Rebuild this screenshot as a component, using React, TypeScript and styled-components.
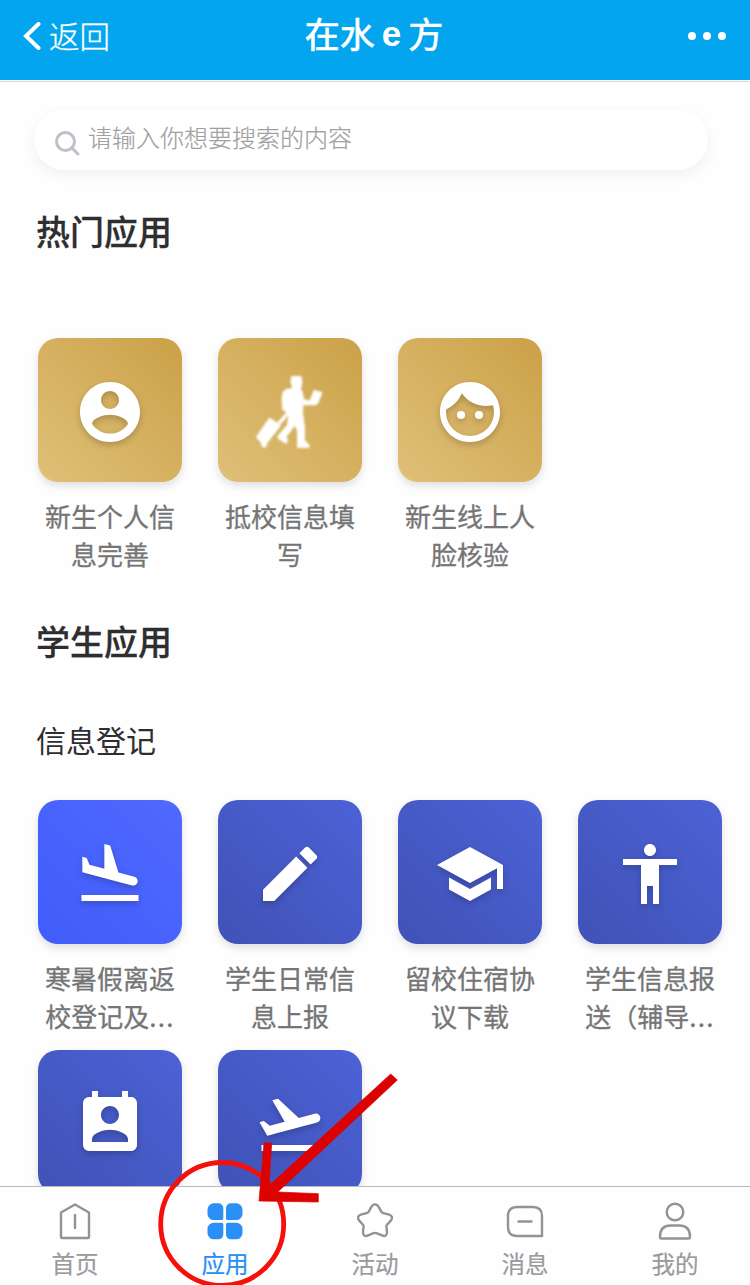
import React from "react";
import styled, { createGlobalStyle } from "styled-components";
import {
  MdFlightLand,
  MdEdit,
  MdSchool,
  MdAccessibility,
  MdPermContactCalendar,
  MdFlightTakeoff,
} from "react-icons/md";

const GlobalStyle = createGlobalStyle`
  *, *::before, *::after { box-sizing: border-box; }
  body {
    margin: 0;
    background: #fefefe;
    font-family: "Noto Sans CJK SC", sans-serif;
    overflow: hidden;
  }
`;

const Screen = styled.div`
  position: relative;
  display: flex;
  flex-direction: column;
  width: 750px;
  height: 1285px;
  overflow: hidden;
`;

const Header = styled.header`
  flex: none;
  display: grid;
  grid-template-columns: 1fr auto 1fr;
  align-items: center;
  height: 82px;
  padding: 0 24px 10px 22px;
  background: #02a5ee;
  color: #fff;
  box-shadow: inset 0 -1px #d5dcdf, inset 0 -2px #fff;
`;

const Back = styled.a`
  display: flex;
  align-items: center;
  gap: 7px;
  font-size: 30.5px;
  font-weight: 300;
  line-height: 40px;
  -webkit-text-stroke: 0.3px currentColor;

  span { margin-top: -2px; }
`;

const Title = styled.h1`
  display: flex;
  gap: 7px;
  margin: -4px 0 0;
  font-size: 35px;
  font-weight: 400;
  line-height: 48px;
  -webkit-text-stroke: 0.7px currentColor;
`;

const Latin = styled.span`
  font-family: "Liberation Sans", sans-serif;
  font-weight: 700;
  line-height: 50px;
  -webkit-text-stroke: 0;
`;

const More = styled.div`
  display: flex;
  justify-content: flex-end;
  gap: 7px;
`;

const Dot = styled.i`
  width: 8px;
  height: 8px;
  border-radius: 50%;
  background: #fff;
`;

const Content = styled.main`
  flex: 1;
  min-height: 0;
  overflow: hidden;
  padding: 28px 20px 0;
`;

const Search = styled.div`
  display: flex;
  align-items: center;
  height: 60px;
  margin: 0 22px 0 14px;
  padding: 0 20px;
  gap: 8px;
  border-radius: 30px;
  background: #fff;
  box-shadow: 0 5px 14px rgba(0, 0, 0, 0.06);
  color: #a0a0a2;
  font-size: 24px;
  font-weight: 300;
  line-height: 36px;
  -webkit-text-stroke: 0.2px currentColor;

  svg { margin-top: 5px; }
  span { margin-top: -6px; }
`;

const Section = styled.h2<{ $top: number }>`
  margin: ${(p) => p.$top}px 0 0 16px;
  color: #2e2e30;
  font-size: 34px;
  font-weight: 500;
  line-height: 50px;
  -webkit-text-stroke: 0.3px currentColor;
`;

const Group = styled.h3`
  margin: 51px 0 0 16px;
  color: #2e2e30;
  font-size: 30px;
  font-weight: 400;
  line-height: 44px;
`;

const Grid = styled.div<{ $top: number }>`
  display: grid;
  grid-template-columns: repeat(4, 180px);
  margin-top: ${(p) => p.$top}px;
  row-gap: 14px;
`;

const AppEntry = styled.div`
  display: flex;
  flex-direction: column;
  align-items: center;
`;

const tones = {
  gold: "linear-gradient(45deg, #dfc078, #cba148)",
  bright: "linear-gradient(45deg, #405dfb, #5069fd)",
  indigo: "linear-gradient(45deg, #4052b6, #4c62d6)",
};

const Tile = styled.div<{ $tone: keyof typeof tones }>`
  display: flex;
  align-items: center;
  justify-content: center;
  width: 144px;
  height: 144px;
  padding-top: 4px;
  border-radius: 20px;
  background: ${(p) => tones[p.$tone]};
  box-shadow: 0 4px 8px rgba(0, 0, 0, 0.12);
  color: #fff;

  svg { filter: drop-shadow(0 3px 3px rgba(0, 0, 0, 0.2)); }
`;

const SoftIcon = styled.svg`
  && { filter: blur(0.8px); margin-top: -4px; }
  position: relative;
  top: 2px;
`;

const Label = styled.div`
  display: flex;
  flex-direction: column;
  align-items: center;
  height: 76px;
  margin-top: 15px;
  margin-bottom: 1px;
  color: #757575;
  font-size: 26px;
  font-weight: 400;
  line-height: 38px;
  white-space: nowrap;
  -webkit-text-stroke: 0.3px currentColor;
`;

const Line = styled.div`
  display: flex;
`;

const Ellipsis = styled.span`
  letter-spacing: 1.2px;
`;

const Nav = styled.nav`
  flex: none;
  display: grid;
  grid-template-columns: repeat(5, 150px);
  height: 99px;
  border-top: 1px solid #b9b9bd;
  background: #fefefe;
`;

const Tab = styled.a<{ $active?: boolean }>`
  display: flex;
  flex-direction: column;
  align-items: center;
  padding-top: 12px;
  color: ${(p) => (p.$active ? "#2a8ff7" : "#9a9a9d")};
  font-size: 23.5px;
  line-height: 34px;
  -webkit-text-stroke: 0.2px currentColor;

  svg { margin-bottom: 5px; }
`;

const Annotation = styled.svg`
  position: absolute;
  left: 150px;
  top: 1065px;
`;

const Account = () => (
  <svg width="72" height="72" viewBox="0 0 24 24" fill="currentColor">
    <path d="M12 2C6.480 2 2 6.480 2 12s4.480 10 10 10 10-4.480 10-10S17.520 2 12 2zm0 3c1.660 0 3 1.340 3 3s-1.340 3-3 3-3-1.340-3-3 1.340-3 3-3zm0 14.200c-2.500 0-4.710-1.280-6-3.220.030-1.990 4-3.080 6-3.080 1.990 0 5.970 1.090 6 3.080-1.290 1.940-3.500 3.220-6 3.220z" />
  </svg>
);

const Face = () => (
  <svg width="72" height="72" viewBox="0 0 24 24" fill="currentColor">
    <circle cx="9" cy="13" r="1.350" />
    <circle cx="15" cy="13" r="1.350" />
    <path d="M12 2C6.480 2 2 6.480 2 12s4.480 10 10 10 10-4.480 10-10S17.520 2 12 2zm0 18c-4.410 0-8-3.590-8-8 0-.290.020-.580.050-.860 2.360-1.050 4.230-2.980 5.210-5.370C11.070 8.330 14.050 10 17.420 10c.780 0 1.530-.090 2.250-.260.210.710.330 1.470.330 2.260 0 4.410-3.590 8-8 8z" />
  </svg>
);

const Traveler = () => (
  <SoftIcon width="72" height="72" viewBox="0 0 72 72" fill="currentColor" stroke="currentColor" strokeWidth="1" strokeLinejoin="round">
    <path d="M37.500 0h9.500l.5 5 1 1-1 1.500-.5 4-1 1.500 2.200 2.500 1.300 8 6.500 1.500L60 14.500l8 2-4.300 10.800-1.700 1.500H49l-.5 8 1.800 13 .2 14.500 4.500 4.500v3H43.700l-.2-17L41 49l-9 12 1.700 3.500L32 67.500l-8-5.200V60l9.500-11 1.500-11-9 10.500-2.300-2 9-10L28.500 33 28 22l1.300-6.500 4-2.500h4.200l1-2-1.500-4z" />
    <path d="M15.500 42l11 7.500-13.200 17-1.800 4.500h-3l-1.500-4.500L2.500 61z" />
  </SoftIcon>
);

type AppItem = { tone: keyof typeof tones; icon: React.ReactNode; lines: string[]; cut?: boolean };

const hot: AppItem[] = [
  { tone: "gold", icon: <Account />, lines: ["新生个人信", "息完善"] },
  { tone: "gold", icon: <Traveler />, lines: ["抵校信息填", "写"] },
  { tone: "gold", icon: <Face />, lines: ["新生线上人", "脸核验"] },
];

const student: AppItem[] = [
  { tone: "bright", icon: <MdFlightLand size={72} />, lines: ["寒暑假离返", "校登记及"], cut: true },
  { tone: "indigo", icon: <MdEdit size={72} />, lines: ["学生日常信", "息上报"] },
  { tone: "indigo", icon: <MdSchool size={72} />, lines: ["留校住宿协", "议下载"] },
  { tone: "indigo", icon: <MdAccessibility size={72} />, lines: ["学生信息报", "送（辅导"], cut: true },
  { tone: "indigo", icon: <MdPermContactCalendar size={72} />, lines: [] },
  { tone: "indigo", icon: <MdFlightTakeoff size={72} />, lines: [] },
];

const AppGrid = ({ items, top }: { items: AppItem[]; top: number }) => (
  <Grid $top={top}>
    {items.map((a, i) => (
      <AppEntry key={i}>
        <Tile $tone={a.tone}>{a.icon}</Tile>
        <Label>
          {a.lines.map((line, n) => (
            <Line key={n}>
              <span>{line}</span>
              {a.cut && n === a.lines.length - 1 && <Ellipsis>...</Ellipsis>}
            </Line>
          ))}
        </Label>
      </AppEntry>
    ))}
  </Grid>
);

const TabIcon = ({ children }: { children: React.ReactNode }) => (
  <svg width="40" height="42" viewBox="0 0 40 42" fill="none" stroke="#929297" strokeWidth="2.400" strokeLinejoin="round" strokeLinecap="round">
    {children}
  </svg>
);

const tabs = [
  { label: "首页", icon: <path d="M20 5.500l14 8V38q0 1-1 1H7q-1 0-1-1V13.500zM20 16v13" /> },
  {
    label: "应用",
    icon: (
      <g fill="#2a8ff7" stroke="none">
        <path d="M8.800 4.300h4.700A4.800 4.800 0 0 1 18.300 9v10.500q0 1.500-1.500 1.500h-8a6.300 6.300 0 0 1-6.300-6.300v-4.100a6.300 6.300 0 0 1 6.300-6.300z" />
        <path d="M31.200 4.300h-5.400A4.800 4.800 0 0 0 21 9v10.500q0 1.500 1.500 1.500h8.700a6.300 6.300 0 0 0 6.300-6.300v-4.100a6.300 6.300 0 0 0-6.300-6.300z" />
        <path d="M8.800 40.300h4.700a4.800 4.800 0 0 0 4.800-4.700V25.200q0-1.500-1.500-1.500h-8A6.300 6.300 0 0 0 2.500 30v4a6.300 6.300 0 0 0 6.300 6.300z" />
        <path d="M31.200 40.300h-5.400a4.800 4.800 0 0 1-4.800-4.700V25.200q0-1.500 1.500-1.500h8.700a6.300 6.300 0 0 1 6.300 6.300v4a6.300 6.300 0 0 1-6.300 6.300z" />
      </g>
    ),
  },
  {
    label: "活动",
    icon: (
      <path d="M20 5.400C22 5.400 23 6.700 23.800 8.200L26.400 12.800C26.800 13.600 27.400 14 28.300 14.200L33.500 15.300C37 16.100 38.100 19 35.800 21.600L32.200 25.500C31.500 26.200 31.300 26.900 31.400 27.800L32 32.700C32.400 36.200 30 37.900 27 36.400L22 34.400C21 34 20.600 33.900 20 33.900C19.400 33.900 19 34 18 34.400L13 36.400C10 37.900 7.600 36.200 8 32.700L8.600 27.800C8.700 26.900 8.500 26.200 7.800 25.500L4.200 21.600C1.900 19 3 16.100 6.500 15.300L11.700 14.200C12.600 14 13.200 13.600 13.600 12.800L16.200 8.200C17 6.700 18 5.400 20 5.400z" />
    ),
  },
  { label: "消息", icon: <path d="M12 8h16q9 0 9 9v20H12q-9 0-9-9V17q0-9 9-9zM13.500 22.500h13" /> },
  {
    label: "我的",
    icon: (
      <>
        <circle cx="20" cy="13" r="8.300" />
        <path d="M6.500 39.500q-1.500 0-1.500-2 0-11 11-11h8q11 0 11 11 0 2-1.500 2z" />
      </>
    ),
  },
];

export default function App() {
  return (
    <Screen>
      <GlobalStyle />
      <Header>
        <Back>
          <svg width="20" height="28" viewBox="0 0 20 28" fill="none" stroke="#fff" strokeWidth="4">
            <path d="M16.500 2L4 14l12.500 12" strokeLinecap="round" />
          </svg>
          <span>返回</span>
        </Back>
        <Title>
          <span>在水</span>
          <Latin>e</Latin>
          <span>方</span>
        </Title>
        <More>
          <Dot />
          <Dot />
          <Dot />
        </More>
      </Header>
      <Content>
        <Search>
          <svg width="26" height="26" viewBox="0 0 26 26" fill="none" stroke="#bfc0c9" strokeWidth="3">
            <circle cx="11.500" cy="11.500" r="9" />
            <path d="M18 18l6 6" strokeLinecap="round" />
          </svg>
          <span>请输入你想要搜索的内容</span>
        </Search>
        <Section $top={36}>热门应用</Section>
        <AppGrid items={hot} top={82} />
        <Section $top={42}>学生应用</Section>
        <Group>信息登记</Group>
        <AppGrid items={student} top={39} />
      </Content>
      <Nav>
        {tabs.map((t, i) => (
          <Tab key={t.label} $active={i === 1}>
            <TabIcon>{t.icon}</TabIcon>
            {t.label}
          </Tab>
        ))}
      </Nav>
      <Annotation width="260" height="220" viewBox="0 0 260 220" fill="none">
        <circle cx="72.200" cy="159" r="61.500" stroke="#f5100c" strokeWidth="4.800" />
        <path d="M240.700 9l6.600 6L127.700 127l40.600 1.700v8.300L109 136l5-58.300 7.700.6-2.700 42.400z" fill="#dc0202" stroke="#dc0202" strokeWidth="0.700" />
      </Annotation>
    </Screen>
  );
}
